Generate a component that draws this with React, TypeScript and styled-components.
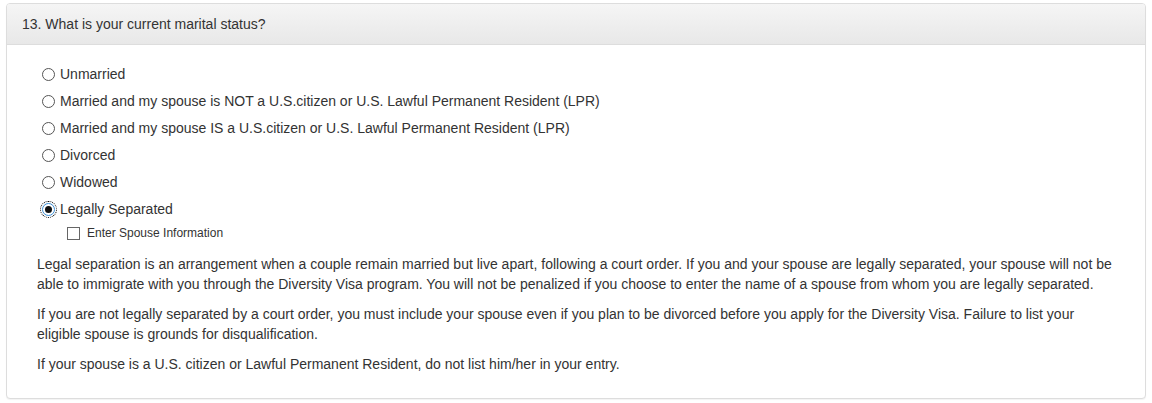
import React from "react";
import styled, { createGlobalStyle } from "styled-components";

const Global = createGlobalStyle`
  html, body { margin: 0; padding: 0; background: #fff; }
  body {
    font-family: "Liberation Sans", Arial, sans-serif;
    font-size: 14px;
    line-height: 20px;
    color: #333;
  }
`;

const Page = styled.div`
  padding: 3px 6px;
`;

const Panel = styled.section`
  border: 1px solid #ddd;
  border-radius: 4px;
  background: #fff;
  box-shadow: 0 1px 1px rgba(0, 0, 0, 0.05);
  overflow: hidden;
`;

const Heading = styled.div`
  padding: 10px 15px;
  background: linear-gradient(to bottom, #f5f5f5 0%, #e8e8e8 100%);
  border-bottom: 1px solid #ddd;
  font-size: 14px;
  line-height: 20px;
  color: #333;
`;

const Body = styled.div`
  padding: 19px 30px 24px 30px;
`;

const Options = styled.div`
  display: flex;
  flex-direction: column;
  gap: 7px;
`;

const RadioRow = styled.label`
  display: flex;
  align-items: center;
  height: 20px;
  padding-left: 5px;
  cursor: pointer;
`;

const RadioCircle = styled.span<{ $checked?: boolean; $focused?: boolean }>`
  position: relative;
  box-sizing: border-box;
  width: 13px;
  height: 13px;
  border-radius: 50%;
  border: 1px solid ${(p) => (p.$checked ? "#3c8fd6" : "#555")};
  background: #fff;
  margin-right: 5px;
  flex: none;
  outline: ${(p) => (p.$focused ? "1px dotted #000" : "none")};
  outline-offset: 1px;
  &::after {
    content: "";
    display: ${(p) => (p.$checked ? "block" : "none")};
    position: absolute;
    left: 2px;
    top: 2px;
    width: 7px;
    height: 7px;
    border-radius: 50%;
    background: #111;
  }
`;

const CheckRow = styled.label`
  display: flex;
  align-items: center;
  height: 18px;
  margin-top: 5px;
  padding-left: 30px;
  font-size: 12px;
  cursor: pointer;
`;

const CheckBox = styled.span`
  box-sizing: border-box;
  width: 13px;
  height: 13px;
  border: 1px solid #666;
  background: #fff;
  margin-right: 7px;
  flex: none;
`;

const Notes = styled.div`
  margin-top: 12px;
`;

const Para = styled.p`
  margin: 0 0 10px;
  &:last-child { margin-bottom: 0; }
`;

const options = [
  "Unmarried",
  "Married and my spouse is NOT a U.S.citizen or U.S. Lawful Permanent Resident (LPR)",
  "Married and my spouse IS a U.S.citizen or U.S. Lawful Permanent Resident (LPR)",
  "Divorced",
  "Widowed",
  "Legally Separated",
];

export default function App() {
  return (
    <>
      <Global />
      <Page>
        <Panel>
          <Heading>13. What is your current marital status?</Heading>
          <Body>
            <Options>
              {options.map((o) => {
                const sel = o === "Legally Separated";
                return (
                  <RadioRow key={o}>
                    <RadioCircle $checked={sel} $focused={sel} />
                    {o}
                  </RadioRow>
                );
              })}
            </Options>
            <CheckRow>
              <CheckBox />
              Enter Spouse Information
            </CheckRow>
            <Notes>
              <Para>
                Legal separation is an arrangement when a couple remain married but live apart, following a court order. If you and your spouse are legally separated, your spouse will not be able to immigrate with you through the Diversity Visa program. You will not be penalized if you choose to enter the name of a spouse from whom you are legally separated.
              </Para>
              <Para>
                If you are not legally separated by a court order, you must include your spouse even if you plan to be divorced before you apply for the Diversity Visa. Failure to list your eligible spouse is grounds for disqualification.
              </Para>
              <Para>
                If your spouse is a U.S. citizen or Lawful Permanent Resident, do not list him/her in your entry.
              </Para>
            </Notes>
          </Body>
        </Panel>
      </Page>
    </>
  );
}
